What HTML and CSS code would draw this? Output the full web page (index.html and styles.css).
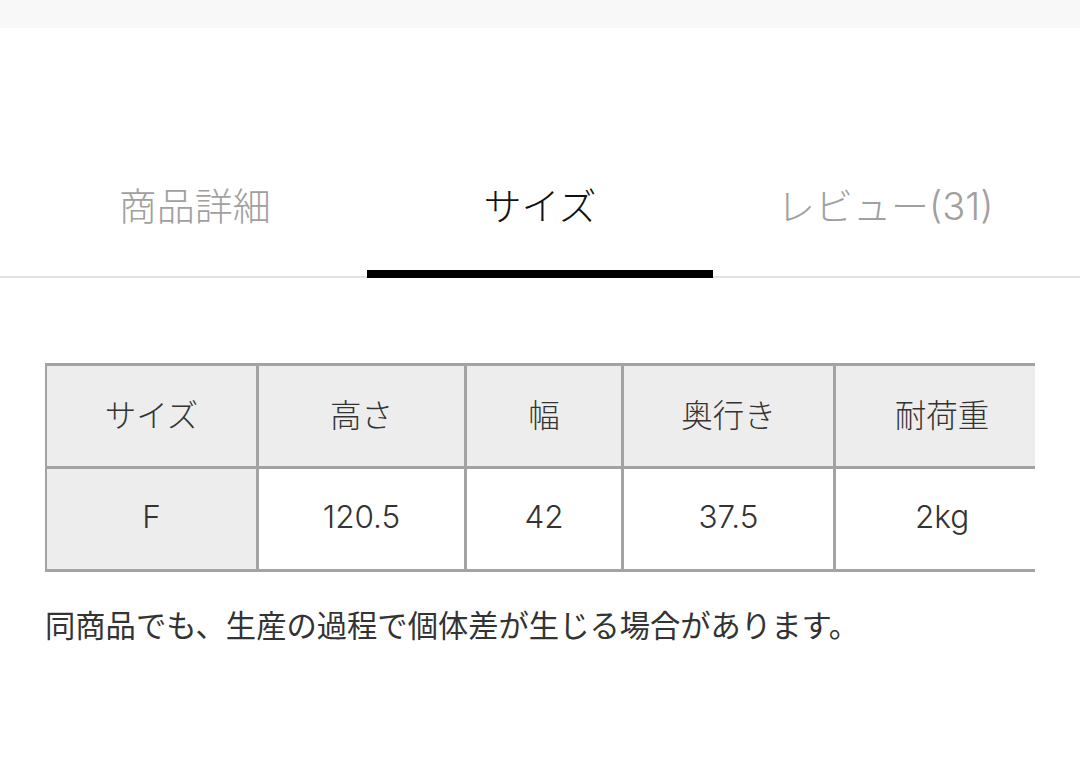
FILE: index.html
```html
<!DOCTYPE html>
<html lang="ja">
<head>
<meta charset="utf-8">
<link rel="stylesheet" href="styles.css">
</head>
<body>
<div class="topbar"></div>
<nav class="tabs">
  <div class="tab">商品詳細</div>
  <div class="tab active">サイズ</div>
  <div class="tab">レビュー(31)</div>
</nav>
<div class="table-wrap">
  <table class="size-table">
    <colgroup>
      <col class="c1"><col class="c2"><col class="c3"><col class="c4"><col class="c5">
    </colgroup>
    <tr class="head">
      <th>サイズ</th><th>高さ</th><th>幅</th><th>奥行き</th><th>耐荷重</th>
    </tr>
    <tr>
      <th>F</th><td>120.5</td><td>42</td><td>37.5</td><td>2kg</td>
    </tr>
  </table>
</div>
<p class="note">同商品でも、生産の過程で個体差が生じる場合があります。</p>
</body>
</html>
```
FILE: styles.css
```css
html, body {
  margin: 0;
  padding: 0;
  background: #ffffff;
  font-family: "Inter", "Noto Sans CJK JP", "Noto Sans", sans-serif;
}
.topbar {
  height: 28px;
  background: #f8f8f8;
}
.tabs {
  display: grid;
  grid-template-columns: repeat(3, 1fr);
  padding: 156px 22px 0;
  border-bottom: 2px solid #e2e2e2;
}
.tab {
  position: relative;
  text-align: center;
  font-size: 38px;
  line-height: 44px;
  padding-bottom: 48px;
  color: #a0a0a0;
  font-weight: 300;
}
.tab.active {
  color: #111111;
}
.tab.active::after {
  content: "";
  position: absolute;
  left: 0;
  right: 0;
  bottom: -2px;
  height: 8px;
  background: #000000;
}
.table-wrap {
  margin: 85px 0 0 45px;
  width: 990px;
  overflow: hidden;
}
.size-table {
  table-layout: fixed;
  border-collapse: collapse;
  width: 1004px;
  margin-left: -1px;
}
.c1 { width: 212px; }
.c2 { width: 208px; }
.c3 { width: 157px; }
.c4 { width: 212px; }
.c5 { width: 215px; }
.size-table th,
.size-table td {
  border: 3px solid #a3a3a3;
  height: 94px;
  padding: 0 0 6px;
  text-align: center;
  vertical-align: middle;
  font-size: 31.5px;
  font-weight: 300;
  color: #333333;
}
.size-table th {
  background: #ededed;
}
.size-table td {
  background: #ffffff;
}
.note {
  margin: 34px 0 0 45px;
  font-size: 30.3px;
  line-height: 40px;
  color: #333333;
}
```
